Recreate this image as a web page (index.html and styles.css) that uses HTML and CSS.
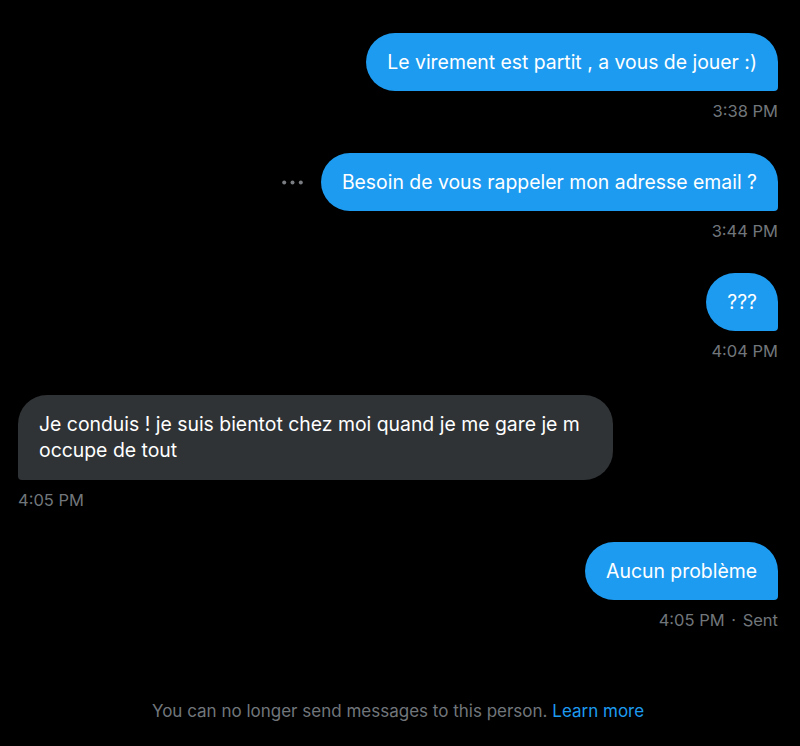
FILE: index.html
```html
<!DOCTYPE html>
<html lang="fr">
<head>
<meta charset="utf-8">
<title>Messages</title>
<link rel="stylesheet" href="styles.css">
</head>
<body>
<main class="thread">
  <div class="msg sent">
    <div class="row">
      <div class="bubble">Le virement est partit , a vous de jouer :)</div>
    </div>
    <div class="meta">3:38 PM</div>
  </div>
  <div class="msg sent">
    <div class="row">
      <span class="more" aria-label="More">
        <svg viewBox="0 0 21 5" width="21" height="5"><circle cx="2.2" cy="2.5" r="2"/><circle cx="10.5" cy="2.5" r="2"/><circle cx="18.8" cy="2.5" r="2"/></svg>
      </span>
      <div class="bubble">Besoin de vous rappeler mon adresse email ?</div>
    </div>
    <div class="meta">3:44 PM</div>
  </div>
  <div class="msg sent">
    <div class="row">
      <div class="bubble">???</div>
    </div>
    <div class="meta">4:04 PM</div>
  </div>
  <div class="msg received">
    <div class="row">
      <div class="bubble">Je conduis ! je suis bientot chez moi quand je me gare je m occupe de tout</div>
    </div>
    <div class="meta">4:05 PM</div>
  </div>
  <div class="msg sent">
    <div class="row">
      <div class="bubble">Aucun problème</div>
    </div>
    <div class="meta">4:05 PM <span class="dot">·</span> Sent</div>
  </div>
  <p class="notice">You can no longer send messages to this person. <a href="#">Learn more</a></p>
</main>
</body>
</html>
```
FILE: styles.css
```css
html, body {
  margin: 0;
  padding: 0;
  background: #000;
}
body {
  font-family: Inter, "Noto Sans", sans-serif;
  color: #e7e9ea;
}
.thread {
  display: flex;
  flex-direction: column;
  padding: 33px 22px 0 18px;
}
.msg {
  display: flex;
  flex-direction: column;
  gap: 10px;
  margin-bottom: 32px;
}
.msg.sent { align-items: flex-end; }
.msg.received {
  align-items: flex-start;
  margin-top: 2px;
}
.row {
  display: flex;
  align-items: center;
  gap: 18px;
}
.bubble {
  box-sizing: border-box;
  font-size: 19.4px;
  line-height: 26px;
  color: #fff;
  padding: 16px 21px;
  border-radius: 29px;
}
.sent .bubble {
  background: #1d9bf0;
  border-bottom-right-radius: 4px;
}
.received .bubble {
  background: #2f3336;
  border-bottom-left-radius: 4px;
  max-width: 595px;
  padding: 16px 21px 17px;
}
.more {
  display: flex;
  fill: #7a7e83;
}
.meta {
  font-size: 16.5px;
  line-height: 20px;
  color: #71767b;
}
.dot { margin: 0 2px; }
.notice {
  margin: 37px 0 0;
  text-align: center;
  font-size: 17px;
  line-height: 24px;
  color: #71767b;
}
.notice a {
  color: #1d9bf0;
  text-decoration: none;
}
```
